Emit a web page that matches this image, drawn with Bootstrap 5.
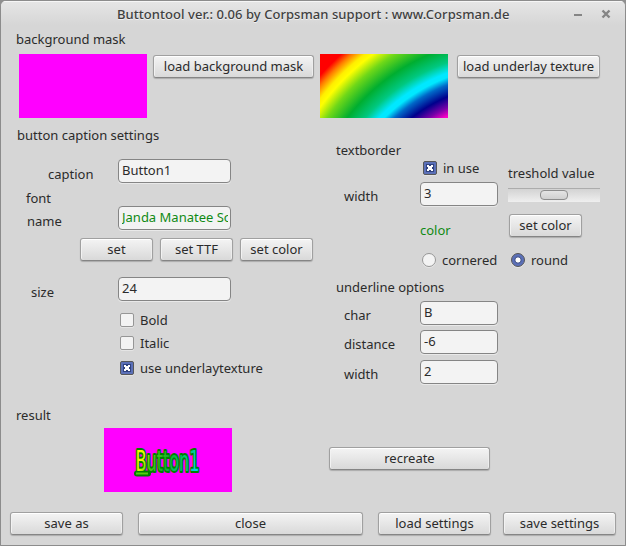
<!DOCTYPE html>
<html lang="en">
<head>
<meta charset="utf-8">
<title>Buttontool</title>
<meta name="viewport" content="width=device-width, initial-scale=1">
<link href="https://cdn.jsdelivr.net/npm/bootstrap@5.3.0/dist/css/bootstrap.min.css" rel="stylesheet">
<style>
  body { background: #8f8f8f; font: 13px/16px "Noto Sans", "Open Sans", sans-serif; color: #2b2b2b; overflow: hidden; }
  .app-window { width: 626px; height: 546px; border: 1px solid #8c8c8c; border-radius: 6px 6px 0 0; background: #d6d6d6; overflow: hidden; }
  .title-bar { height: 27px; background: linear-gradient(#e6e6e6, #d6d6d6 24px); box-shadow: inset 0 1px #f6f6f6; color: #404040; font-weight: 500; text-shadow: 0 1px #f0f0f0; padding: 0 14px 2px 116px; }
  .title-text { letter-spacing: .05px; }
  .tool-btn { --bs-btn-padding-x: 0; --bs-btn-padding-y: 0; --bs-btn-font-size: 13px; --bs-btn-line-height: 16px; --bs-btn-border-radius: 3px; --bs-btn-color: #2b2b2b; --bs-btn-border-color: #a0a0a0;
    width: 73px; height: 23px; padding-bottom: 2px; white-space: nowrap; background: linear-gradient(#f4f4f4, #d9d9d9); border-bottom-color: #858585; box-shadow: inset 0 1px #fff, inset 1px 0 #f2f2f2, inset -1px 0 #ededed, 0 1px 1px #0003; }
  .edit { height: 24px; min-height: 0; padding: 0 2px 2px 3px; border: 1px solid #858585; border-radius: 4px; background: #f3f3f3; color: #2b2b2b; font-size: 13px; line-height: 16px; box-shadow: 0 1px #e9e9e9; }
  .w-edit-l { width: 113px; } .w-edit-r { width: 78px; }
  .green-text { color: #108a14; }
  .swatch { width: 128px; height: 64px; background: #f0f; }
  .rainbow { background: radial-gradient(circle 268px at 190px 190px, #ff00c8 142px, #7800a8 150px, #00008c 160px, #0068c8 171px, #00e8ff 178px, #00e8ff 182px, #00c880 192px, #00ae30 206px, #70d818 222px, #ff0 234px, #ffee00 239px, #ff7c00 247px, red 254px); }
  .tick { width: 14px; height: 14px; flex: none; border: 1px solid #969696; border-radius: 2px; background: #f3f3f3; box-shadow: 0 1px #e5e5e5; }
  .tick.on { border-color: #575757; background: #5b70b8; }
  .tick svg { display: block; width: 12px; height: 12px; }
  .tick.dot { border-radius: 50%; }
  .label-line { height: 16px; }
  .caption-head { margin: 0 0 16px 16px; }
  .field { height: 24px; } .field > span { padding-top: 7px; } .col-right .field > span { padding-top: 6px; }
  .pane-top { height: 99px; padding: 3px 0 0 15px; }
  .swatches { margin: 7px 0 0 3px; }
  .swatches .tool-btn { margin-top: 1px; }
  .mask-btn { width: 161px; margin-left: 6px; } .texture-btn { width: 143px; margin-left: 9px; }
  .texture-swatch { margin-left: 6px; }
  .middle { height: 279px; }
  .col-left { width: 319px; } .col-right { width: 305px; }
  .lab-caption { width: 117px; padding-left: 47px; } .lab-name { width: 117px; padding-left: 26px; } .lab-size { width: 117px; padding-left: 30px; }
  .font-head { margin: 7px 0 0 25px; }
  .font-btns { gap: 7px; margin: 8px 0 16px 79px; }
  .check { gap: 6px; height: 16px; margin-left: 119px; }
  .check-bold { margin-top: 11px; } .check-italic { margin-top: 7px; } .check-under { margin-top: 9px; }
  .border-head { margin: 15px 0 0 16px; }
  .lab-r { width: 100px; padding-left: 24px; }
  .in-use { gap: 6px; margin: 2px 0 6px 103px; }
  .side { margin-left: 10px; padding-top: 7px; }
  .side .tool-btn { margin-left: 1px; }
  .track { width: 92px; height: 14px; margin: 7px 0 12px; padding-top: 1px; border-top: 1px solid #acacac; background: linear-gradient(#d3d3d3, #efefef); }
  .thumb { width: 28px; height: 10px; margin: 0 auto; border: 1px solid #8d8d8d; border-radius: 4px; background: linear-gradient(#e4e4e4, #d0d0d0); }
  .color-line { margin: 16px 0 0 100px; }
  .under-head { margin: 11px 0 6px 16px; }
  .radios { margin: 14px 0 0 102px; }
  .radio-a { width: 75px; padding-left: 6px; } .radio-b { padding-left: 6px; }
  .row-distance { margin-top: 5px; } .row-width { margin-top: 6px; }
  .pane-result { height: 107px; padding: 1px 0 0 15px; }
  .result-row { margin: 5px 0 0 88px; }
  .result-row .swatch { overflow: visible; }
  .recreate { width: 161px; margin: 19px 0 0 97px; }
  .footer-bar { padding-left: 9px; margin-top: -1px; gap: 15px; }
  .w-113 { width: 113px; } .w-225 { width: 225px; } .save-settings { margin-left: -3px; }
</style>
<script src="https://cdn.jsdelivr.net/npm/bootstrap@5.3.0/dist/js/bootstrap.bundle.min.js"></script>
</head>
<body>
<div class="app-window d-flex flex-column">
  <header class="title-bar d-flex align-items-center">
    <span class="title-text text-nowrap me-auto">Buttontool ver.: 0.06 by Corpsman support : www.Corpsman.de</span>
    <svg width="38" height="12" viewBox="0 0 38 12" fill="none" stroke="#858585" stroke-width="2"><path d="M1 7h8"/><path d="M29.5 2.5l7 7M36.5 2.5l-7 7" stroke-width="2.4"/></svg>
  </header>

  <section class="pane-top">
    <div class="label-line"><span>background mask</span></div>
    <div class="swatches d-flex align-items-start">
      <div class="swatch"></div>
      <button class="btn tool-btn mask-btn">load background mask</button>
      <div class="swatch rainbow texture-swatch"></div>
      <button class="btn tool-btn texture-btn">load underlay texture</button>
    </div>
  </section>

  <main class="middle d-flex">
    <section class="col-left">
      <div class="caption-head label-line">button caption settings</div>
      <div class="field d-flex"><span class="lab-caption">caption</span><input class="form-control edit w-edit-l" value="Button1"></div>
      <div class="font-head label-line">font</div>
      <div class="field d-flex"><span class="lab-name">name</span><input class="form-control edit w-edit-l green-text" value="Janda Manatee Solid"></div>
      <div class="font-btns d-flex">
        <button class="btn tool-btn">set</button><button class="btn tool-btn">set TTF</button><button class="btn tool-btn">set color</button>
      </div>
      <div class="field d-flex"><span class="lab-size">size</span><input class="form-control edit w-edit-l" value="24"></div>
      <div class="check check-bold d-flex align-items-center"><span class="tick"></span>Bold</div>
      <div class="check check-italic d-flex align-items-center"><span class="tick"></span>Italic</div>
      <div class="check check-under d-flex align-items-center"><span class="tick on"><svg viewBox="0 0 12 12"><path d="M2 2h8v8H2z" fill="#30427f"/><path d="M3 3h2v1h2V3h2v2H8v2h1v2H7V8H5v1H3V7h1V5H3z" fill="#fff"/></svg></span>use underlaytexture</div>
    </section>

    <section class="col-right">
      <div class="border-head label-line">textborder</div>
      <div class="d-flex">
        <div>
          <div class="in-use d-flex align-items-center"><span class="tick on"><svg viewBox="0 0 12 12"><path d="M2 2h8v8H2z" fill="#30427f"/><path d="M3 3h2v1h2V3h2v2H8v2h1v2H7V8H5v1H3V7h1V5H3z" fill="#fff"/></svg></span>in use</div>
          <div class="field d-flex"><span class="lab-r">width</span><input class="form-control edit w-edit-r" value="3"></div>
          <div class="color-line label-line green-text">color</div>
        </div>
        <div class="side">
          <div class="label-line text-nowrap">treshold value</div>
          <div class="track"><div class="thumb"></div></div>
          <button class="btn tool-btn d-block">set color</button>
        </div>
      </div>
      <div class="radios d-flex align-items-center">
        <span class="tick dot"></span><span class="radio-a d-block text-nowrap">cornered</span>
        <span class="tick dot on"><svg viewBox="0 0 12 12"><circle cx="6" cy="6" r="3.2" fill="#fff" stroke="#30427f"/></svg></span><span class="radio-b">round</span>
      </div>
      <div class="under-head label-line">underline options</div>
      <div class="field d-flex"><span class="lab-r">char</span><input class="form-control edit w-edit-r" value="B"></div>
      <div class="field row-distance d-flex"><span class="lab-r">distance</span><input class="form-control edit w-edit-r" value="-6"></div>
      <div class="field row-width d-flex"><span class="lab-r">width</span><input class="form-control edit w-edit-r" value="2"></div>
    </section>
  </main>

  <section class="pane-result">
    <div class="label-line">result</div>
    <div class="result-row d-flex align-items-start">
      <svg class="swatch" viewBox="0 0 128 64">
        <defs><linearGradient id="ink" gradientUnits="userSpaceOnUse" x1="32" y1="20" x2="94" y2="44">
          <stop offset="0" stop-color="#ff0"/><stop offset=".16" stop-color="#e8f800"/><stop offset=".27" stop-color="#58cc10"/><stop offset=".5" stop-color="#10b428"/><stop offset=".8" stop-color="#00c890"/><stop offset="1" stop-color="#00d8ff"/>
        </linearGradient></defs>
        <path d="M33 45.500h11" stroke="#008000" stroke-width="6" stroke-linecap="round"/>
        <text x="31.500" y="42.500" font-family="DejaVu Sans" font-size="29" textLength="64" lengthAdjust="spacingAndGlyphs" fill="url(#ink)" stroke="#008000" stroke-width="4" stroke-linejoin="round" paint-order="stroke">Button1</text>
        <path d="M32 45.500h12" stroke="#58cc10" stroke-width="2"/>
      </svg>
      <button class="btn tool-btn recreate">recreate</button>
    </div>
  </section>

  <footer class="footer-bar d-flex">
    <button class="btn tool-btn w-113">save as</button>
    <button class="btn tool-btn w-225">close</button>
    <button class="btn tool-btn w-113">load settings</button>
    <button class="btn tool-btn w-113 save-settings">save settings</button>
  </footer>
</div>
</body>
</html>
